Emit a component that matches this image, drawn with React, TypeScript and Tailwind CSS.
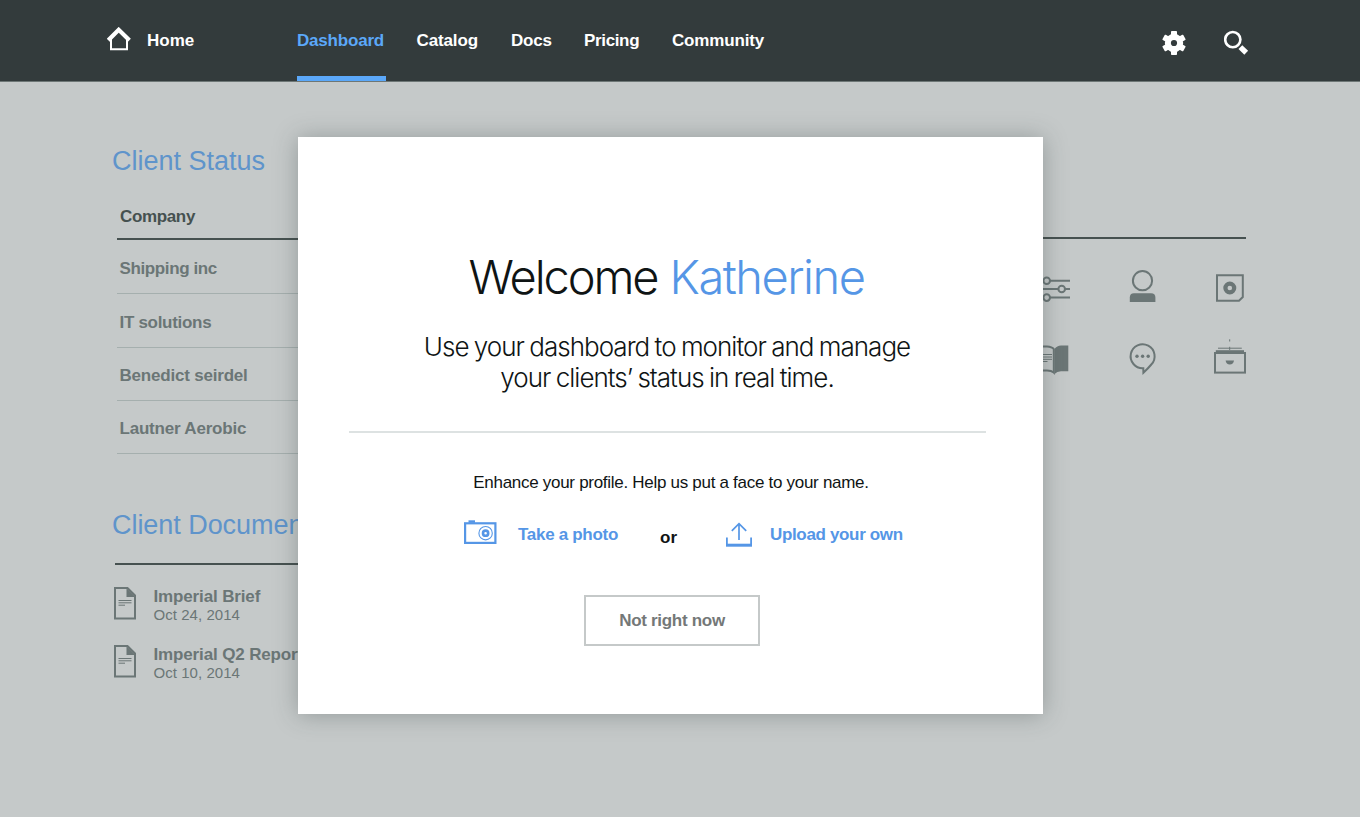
import type { ReactNode } from "react";

const companies = ["Shipping inc", "IT solutions", "Benedict seirdel", "Lautner Aerobic"];
const rowStyles = [
  "h-[54px] pt-[4px] tracking-[-0.38px]",
  "h-[54px] pt-[4px] tracking-[-0.3px]",
  "h-[53px] pt-[3px] tracking-[-0.2px]",
  "h-[53px] pt-[3px] tracking-[-0.2px]",
];

const documents = [
  { name: "Imperial Brief", date: "Oct 24, 2014" },
  { name: "Imperial Q2 Report", date: "Oct 10, 2014" },
];

function HomeIcon() {
  return (
    <svg width="24" height="24" viewBox="0 0 24 24" fill="none" className="shrink-0">
      <path d="M4 12V22.3H20V12" stroke="#fff" strokeWidth="2" />
      <path d="M1.3 13.2L11.7 2.8L22.4 13.2" stroke="#fff" strokeWidth="4.2" />
    </svg>
  );
}

function GearIcon() {
  return (
    <svg width="24" height="26" viewBox="-12 -13 24 26" className="shrink-0">
      <g fill="#fff">
        <circle r="9.2" />
        <rect x="-3" y="-12" width="6" height="24" rx="0.8" />
        <rect x="-3" y="-12" width="6" height="24" rx="0.8" transform="rotate(60)" />
        <rect x="-3" y="-12" width="6" height="24" rx="0.8" transform="rotate(120)" />
      </g>
      <circle r="3.1" fill="#333b3c" />
    </svg>
  );
}

function SearchIcon() {
  return (
    <svg width="25" height="26" viewBox="0 0 25 26" fill="none" className="shrink-0">
      <circle cx="8.8" cy="9.6" r="7.6" stroke="#fff" strokeWidth="2.6" />
      <path d="M16.4 17.1L22.2 22.8" stroke="#fff" strokeWidth="5.4" />
    </svg>
  );
}

function DocumentIcon() {
  return (
    <svg width="22" height="33" viewBox="0 0 22 33" fill="none" className="shrink-0">
      <path d="M1 1H13.5L21 8.5V31.5H1Z" stroke="#6b7676" strokeWidth="2" />
      <path d="M12.5 1L21.5 10H12.5Z" fill="#6b7676" />
      <path d="M4.5 13.5H17.5M4.5 15.8H17.5M4.5 18.2H11" stroke="#6b7676" strokeWidth="1" />
    </svg>
  );
}

function Glyph({ children }: { children: ReactNode }) {
  return (
    <svg width="34" height="40" viewBox="0 0 34 40" fill="none" stroke="#6b7676" strokeWidth="2">
      {children}
    </svg>
  );
}

function CameraIcon() {
  return (
    <svg width="33" height="25" viewBox="0 0 33 25" fill="none" stroke="#5596e6" className="shrink-0">
      <rect x="1.1" y="3.3" width="30.3" height="19.6" strokeWidth="2.2" />
      <rect x="4.5" y="0.3" width="6.5" height="2.5" fill="#5596e6" stroke="none" />
      <circle cx="21.6" cy="13.2" r="6.7" strokeWidth="1.1" />
      <circle cx="21.6" cy="13.2" r="2.6" strokeWidth="2.6" />
    </svg>
  );
}

function UploadIcon() {
  return (
    <svg width="26" height="26" viewBox="0 0 26 26" fill="none" stroke="#5596e6" className="shrink-0">
      <path d="M0.9 15.5V24M25.1 15.5V24" strokeWidth="1.8" />
      <path d="M0 23.2H26" strokeWidth="3" />
      <path d="M13 18V1.8M5.8 8.8L13 1.6L20.2 8.8" strokeWidth="1.7" />
    </svg>
  );
}

function Header() {
  return (
    <header className="flex h-[82px] shrink-0 border-b border-[#6e7776] bg-[#333b3c] text-[17px] leading-[82px] font-bold text-white">
      <a className="ml-[107px] flex w-[190px]">
        <span className="pt-[27px]"><HomeIcon /></span>
        <span className="ml-4">Home</span>
      </a>
      <nav className="flex">
        <a className="h-[81px] w-[88.5px] border-b-[5px] border-[#5ba8f9] tracking-[-0.2px] text-[#5ba8f9]">Dashboard</a>
        <a className="ml-[31px] w-[94.5px] tracking-[-0.12px]">Catalog</a>
        <a className="w-[73px] tracking-[-0.2px]">Docs</a>
        <a className="w-[88px] tracking-[-0.35px]">Pricing</a>
        <a className="tracking-[-0.17px]">Community</a>
      </nav>
      <div className="mr-[111px] ml-auto flex items-center gap-[38px] pt-[4px]">
        <GearIcon />
        <SearchIcon />
      </div>
    </header>
  );
}

function ClientColumn() {
  return (
    <div className="w-[420px] text-[17px] font-bold whitespace-nowrap text-[#6b7676]">
      <section>
        <h2 className="pt-[64px] text-[27px] leading-[30px] font-normal text-[#5f94cb]">Client Status</h2>
        <div className="ml-[4.5px]">
          <div className="flex h-[64px] items-end border-b-2 border-[#465150] pb-[11px] pl-[3.5px] leading-[20px] tracking-[-0.35px] text-[#465150]">
            Company
          </div>
          {companies.map((name, i) => (
            <div key={name} className={`${rowStyles[i]} flex items-center border-b border-[#a5afae] pl-[3px]`}>
              {name}
            </div>
          ))}
        </div>
      </section>
      <section>
        <h2 className="pt-[56px] text-[27px] leading-[30px] font-normal tracking-[-0.05px] text-[#5f94cb]">Client Documents</h2>
        <div className="mt-[23px] ml-[3px] border-b-2 border-[#465150]" />
        <ul className="ml-[2px] pt-[22px]">
          {documents.map((doc) => (
            <li key={doc.name} className="flex h-[57.5px]">
              <DocumentIcon />
              <div className="-mt-px ml-[17.5px]">
                <div className="h-[19px] leading-[21px] tracking-[-0.14px]">{doc.name}</div>
                <div className="pt-px text-[15px] leading-[18px] font-normal tracking-[0.05px]">{doc.date}</div>
              </div>
            </li>
          ))}
        </ul>
      </section>
    </div>
  );
}

function ToolPanel() {
  return (
    <section className="w-[320px] pt-[155px]">
      <div className="mr-px border-b-2 border-[#465150]" />
      <div className="mt-[27px] flex flex-col gap-8">
        <div className="flex justify-end gap-[53px]">
          <Glyph>
            <path d="M0 14.7H4.5M10.8 14.7H31M0 23H19.5M26 23H31M0 31.6H4.5M10.8 31.6H31" />
            <circle cx="7.7" cy="14.7" r="3.3" />
            <circle cx="22.7" cy="23" r="3.3" />
            <circle cx="7.7" cy="31.6" r="3.3" />
          </Glyph>
          <Glyph>
            <circle cx="16.5" cy="14.7" r="9.6" />
            <path d="M3.8 36V31.5Q3.8 27.2 8 27.2H25Q29.4 27.2 29.4 31.5V36Z" fill="#6b7676" stroke="none" />
          </Glyph>
          <Glyph>
            <path d="M4 9.2H29.8V31L26 34.8H4Z" />
            <circle cx="16.8" cy="22" r="4.4" strokeWidth="4.2" />
          </Glyph>
        </div>
        <div className="flex justify-end gap-[53px]">
          <Glyph>
            <path d="M15.5 11Q18 7.5 22 7.5H29.3V33.3H22Q18 33.3 15.5 36Z" fill="#6b7676" stroke="none" />
            <path d="M0 8.5H8Q13 8.7 14.8 11.2V34.6Q12.5 32.4 8 32.4H0" />
            <path d="M3 16.5H13M3 19H13M3 21.3H13M3 23.5H8.5" strokeWidth="1" />
          </Glyph>
          <Glyph>
            <path d="M17.3 30.2A12 12 0 1 1 25.3 26.5Q22 30.5 17.4 34.7Z" />
            <g fill="#6b7676" stroke="none">
              <circle cx="11" cy="18.3" r="1.7" />
              <circle cx="16.6" cy="18.3" r="1.7" />
              <circle cx="22.2" cy="18.3" r="1.7" />
            </g>
          </Glyph>
          <Glyph>
            <rect x="2" y="15" width="30" height="19.6" />
            <path d="M2.8 13.2H31" />
            <path d="M5 10.2H28.8M16.7 1.3V3.5M16.7 8.8V12" strokeWidth="1" />
            <path d="M12.6 22.6H21Q20.4 26.6 16.8 26.6Q13.2 26.6 12.6 22.6Z" fill="#6b7676" stroke="none" />
          </Glyph>
        </div>
      </div>
    </section>
  );
}

function WelcomeDialog() {
  return (
    <div
      role="dialog"
      className="absolute top-[136.5px] left-[298px] h-[577px] w-[745px] bg-white pr-[57px] pl-[51px] whitespace-nowrap text-[#0f1414] shadow-[0_1px_22px_rgba(50,62,62,0.34)]"
    >
      <h1 className="flex justify-center gap-[12px] pt-[111.5px] pr-[2px] font-['Inter',sans-serif] text-[47px] leading-[58px] font-light">
        <span className="tracking-[-2.1px]">Welcome</span>
        <span className="tracking-[-1.5px] text-[#5596e6]">Katherine</span>
      </h1>
      <p className="pt-[25px] pr-px text-center font-['Inter',sans-serif] text-[26px] leading-[31px] font-light tracking-[-0.98px] [word-spacing:-1px]">
        Use your dashboard to monitor and manage
        <br />
        your clients’ status in real time.
      </p>
      <hr className="mt-[37.5px] border-t-2 border-[#dde2e2]" />
      <p className="pt-[40px] pl-[7px] text-center text-[17px] leading-[20px] tracking-[-0.29px]">
        Enhance your profile. Help us put a face to your name.
      </p>
      <div className="mt-[27px] ml-[115px] flex h-[28px] text-[17px] leading-[30px] font-bold text-[#5596e6]">
        <CameraIcon />
        <a className="ml-[21px] w-[142px] tracking-[-0.3px]">Take a photo</a>
        <span className="w-[66px] pt-[3px] text-[#0f1414]">or</span>
        <span className="pt-[2px]"><UploadIcon /></span>
        <a className="ml-[18px] tracking-[-0.34px]">Upload your own</a>
      </div>
      <button className="mt-[47px] ml-[235px] flex h-[51px] w-[176px] items-center justify-center border-2 border-[#c5c9c9] pt-px text-[17px] font-bold tracking-[-0.3px] text-[#747878]">
        Not right now
      </button>
    </div>
  );
}

export default function App() {
  return (
    <div className="relative flex h-[817px] w-[1360px] flex-col overflow-hidden bg-[#c5c9c9] font-['Liberation_Sans',Arial,sans-serif]">
      <Header />
      <main className="flex justify-between pr-[113px] pl-[112px]">
        <ClientColumn />
        <ToolPanel />
      </main>
      <WelcomeDialog />
    </div>
  );
}
